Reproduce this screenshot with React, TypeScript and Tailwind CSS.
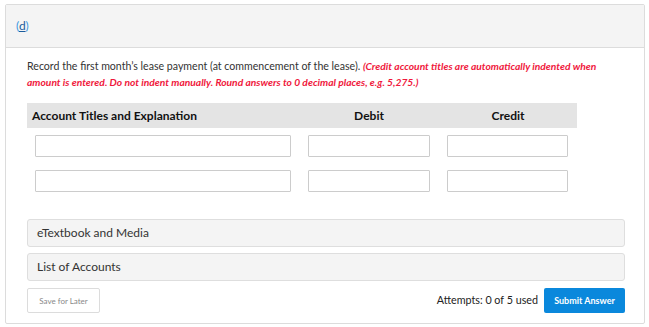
import React from "react";

export default function App() {
  const inputCls = "h-[22px] border border-[#cccccc] bg-white rounded-[1px] shrink-0";
  const row = (
    <div className="flex items-center">
      <div className={`${inputCls} ml-[8px] w-[256px]`} />
      <div className={`${inputCls} ml-[17px] w-[122px]`} />
      <div className={`${inputCls} ml-[17px] w-[121px]`} />
    </div>
  );
  return (
    <div className="w-[649px] h-[327px] bg-white pt-[4px] pl-[5px]" style={{ fontFamily: "Lato, 'Open Sans', sans-serif" }}>
      <div className="w-[640px] h-[320px] border border-[#dcdcdc] rounded-[2px] bg-white flex flex-col">
        <div className="h-[43px] bg-[#f4f4f4] border-b border-[#dcdcdc] flex items-center pl-[10px] shrink-0">
          <span className="text-[12px] text-[#3a96e0]">
            (<span className="underline text-[#1a5c9c]">d</span>)
          </span>
        </div>
        <div className="pl-[21px] pt-[10px] flex flex-col">
          <div className="text-[10.6px] leading-[16px] text-[#333] w-[580px]">
            <span>Record the first month’s lease payment (at commencement of the lease). </span>
            <span className="italic font-bold text-[#f0183c] text-[10.25px]">
              (Credit account titles are automatically indented when
            </span>
            <br />
            <span className="italic font-bold text-[#f0183c] text-[10.25px]">
              amount is entered. Do not indent manually. Round answers to 0 decimal places, e.g. 5,275.)
            </span>
          </div>
          <div className="mt-[13px] w-[550px] h-[25px] bg-[#e4e4e4] flex items-center text-[12px] font-bold text-[#111]">
            <div className="w-[272px] pl-[5px]">Account Titles and Explanation</div>
            <div className="w-[140px] text-center">Debit</div>
            <div className="w-[138px] text-center">Credit</div>
          </div>
          <div className="mt-[7px] flex flex-col gap-[13px]">
            {row}
            {row}
          </div>
          <div className="mt-[27px] w-[598px] h-[28px] bg-[#f4f4f4] border border-[#dedede] rounded-[3px] flex items-center pl-[9px] text-[12px] text-[#333]">
            eTextbook and Media
          </div>
          <div className="mt-[6px] w-[598px] h-[28px] bg-[#f4f4f4] border border-[#dedede] rounded-[3px] flex items-center pl-[9px] text-[12px] text-[#333]">
            List of Accounts
          </div>
          <div className="mt-[7px] w-[598px] flex items-center">
            <div className="w-[73px] h-[25px] border border-[#dcdcdc] rounded-[2px] flex items-center justify-center text-[8px] text-[#888]">
              Save for Later
            </div>
            <div className="ml-auto text-[10.75px] text-[#222] mr-[6px]">Attempts: 0 of 5 used</div>
            <div className="w-[81px] h-[25px] bg-[#0a88dc] rounded-[2px] flex items-center justify-center text-[9px] font-bold text-white">
              Submit Answer
            </div>
          </div>
        </div>
      </div>
    </div>
  );
}
